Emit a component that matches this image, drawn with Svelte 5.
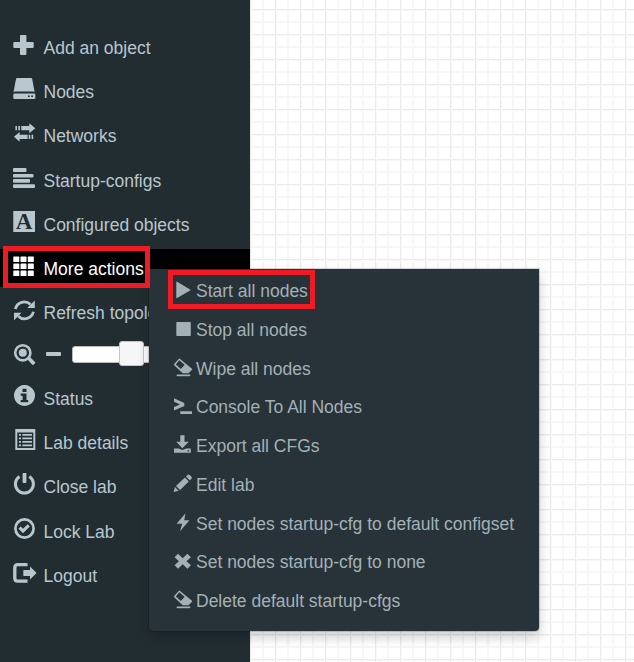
<script>
  const items = [
    { icon: 'plus', label: 'Add an object', height: 44 },
    { icon: 'disk', label: 'Nodes', height: 44 },
    { icon: 'transfer', label: 'Networks', height: 45 },
    { icon: 'align', label: 'Startup-configs', height: 44 },
    { icon: 'letter', label: 'Configured objects', height: 44 },
    { icon: 'grid', label: 'More actions', height: 44, active: true },
    { icon: 'refresh', label: 'Refresh topology', height: 45 },
    { icon: 'zoom', slider: true, height: 41 },
    { icon: 'info', label: 'Status', height: 44 },
    { icon: 'list', label: 'Lab details', height: 44 },
    { icon: 'power', label: 'Close lab', height: 45 },
    { icon: 'check', label: 'Lock Lab', height: 44 },
    { icon: 'logout', label: 'Logout', height: 44 }
  ];
  const actions = [
    { icon: 'play', label: 'Start all nodes', height: 39 },
    { icon: 'stop', label: 'Stop all nodes', height: 39 },
    { icon: 'eraser', label: 'Wipe all nodes', height: 38 },
    { icon: 'console', label: 'Console To All Nodes', height: 39 },
    { icon: 'download', label: 'Export all CFGs', height: 39 },
    { icon: 'pencil', label: 'Edit lab', height: 39 },
    { icon: 'bolt', label: 'Set nodes startup-cfg to default configset', height: 38 },
    { icon: 'cross', label: 'Set nodes startup-cfg to none', height: 39 },
    { icon: 'eraser', label: 'Delete default startup-cfgs', height: 39 }
  ];
</script>

{#snippet sideIcon(name)}
  <svg class="side-icon" width="25" height="24" viewBox="0 0 25 24" fill="currentColor">
    {#if name === 'plus'}
      <path d="M9 2h4.400q1 0 1 1v6h6.300q1 0 1 1v4q0 1-1 1h-6.300v6q0 1-1 1H9q-1 0-1-1v-6H2.300q-1 0-1-1v-4q0-1 1-1H8V3q0-1 1-1z" />
    {:else if name === 'disk'}
      <path d="M5 1h14q1 0 1.200 1l2.400 13q-.8-.4-1.600-.4H3q-.8 0-1.500.4L4 2q.2-1 1-1z" />
      <path fill-rule="evenodd" d="M2.300 16.500h20q1 0 1 1V21q0 1-1 1h-20q-1 0-1-1v-3.500q0-1 1-1zM16 18.500v1.500h1.600v-1.500zM19.300 18.500v1.500h1.700v-1.500z" />
    {:else if name === 'transfer'}
      <path d="M3.400 5h1.600v4.300H3.400zM6.300 5H8v4.300H6.300zM9.300 5h8V2.300L23.300 7.200l-6 5V9.300h-8zM2 15.700 7.600 11v2.700h8V18h-8v2.700zM16.700 13.700h1.600V18h-1.600zM19.600 13.700h1.600V18h-1.600z" />
    {:else if name === 'align'}
      <rect x="1" y="2" width="13.500" height="4" rx="1" />
      <rect x="1" y="8" width="20.500" height="3.600" rx="1" />
      <rect x="1" y="13" width="17" height="3.700" rx="1" />
      <rect x="1" y="18.300" width="22" height="3.700" rx="1" />
    {:else if name === 'letter'}
      <path d="M1.300 1H23v21H1.300z" />
      <text class="letter" x="12.100" y="18.800" text-anchor="middle">A</text>
    {:else if name === 'grid'}
      {#each [2.600, 9.500, 16.500] as y}
        {#each [1.300, 8.500, 15.800] as x}
          <rect {x} {y} width="6" height="5.500" rx=".6" />
        {/each}
      {/each}
    {:else if name === 'refresh'}
      <g fill="none" stroke="currentColor" stroke-width="2.800">
        <path d="M3.400 11A9 9 0 0 1 18.500 6.500" />
        <path d="M21.400 13.800A9 9 0 0 1 6.300 18.200" />
      </g>
      <path d="M22.800 2.500V10h-7.600zM2 22.300v-7.500h7.500z" />
    {:else if name === 'zoom'}
      <circle cx="10.800" cy="9.800" r="7.600" fill="none" stroke="currentColor" stroke-width="2.600" />
      <circle cx="10.800" cy="9.800" r="4" />
      <path d="m15.500 16.500 2.500-2.500 5 5q.6.600 0 1.200l-1.500 1.500q-.6.600-1.200 0z" />
    {:else if name === 'info'}
      <path fill-rule="evenodd" d="M12.500 1a10.500 10.500 0 1 0 .01 0zM10.500 4.700h4v3.200h-4zM8.700 9.500h5.800v6.400h1.700v2.300H8.700v-2.300h1.900v-4.100H8.700z" />
    {:else if name === 'list'}
      <path fill-rule="evenodd" d="M3.300 1h20v21h-20zM5.300 4.500v15.500h16V4.500z" />
      <path d="M7 6h2v1.800H7zM10.300 6H20v1.800h-9.700zM7 9.500h2v1.800H7zM10.300 9.500H20v1.800h-9.700zM7 13h2v1.800H7zM10.300 13H20v1.800h-9.700zM7 16.500h2v1.800H7zM10.300 16.500H20v1.800h-9.700z" />
    {:else if name === 'power'}
      <path d="M7.500 4.500a9 9 0 1 0 9.800 0" fill="none" stroke="currentColor" stroke-width="3" />
      <rect x="10.600" y="1" width="3.800" height="10" rx=".8" />
    {:else if name === 'check'}
      <circle cx="12.500" cy="11.500" r="9.100" fill="none" stroke="currentColor" stroke-width="2.700" />
      <path d="m6.500 11.700 2.200-2.200 2.300 2.200 4.700-4.500 2.100 2.200-6.800 6.800z" />
    {:else if name === 'logout'}
      <path d="M15.500 3.700H5.800q-3 0-3 3v10.500q0 3 3 3h9.700" fill="none" stroke="currentColor" stroke-width="3.300" />
      <path d="M12 9h6V5.500l6.600 6.600L18 18.500V15h-6q-.7 0-.7-.7V9.700Q11.300 9 12 9z" />
    {/if}
  </svg>
{/snippet}

{#snippet actionIcon(name)}
  <svg class="action-icon" width="20" height="20" viewBox="0 0 20 20" fill="currentColor">
    {#if name === 'play'}
      <path d="M3.300 2q0-.8.8-.3l13 7.800q.5.500 0 1l-13 7.500q-.8.400-.8-.4z" />
    {:else if name === 'stop'}
      <rect x="3.300" y="3" width="14.500" height="14" rx=".7" />
    {:else if name === 'eraser'}
      <path fill-rule="evenodd" d="M6.500.4 19 10.800q.5.500 0 1l-3.500 3.500H9.700L1.200 7.200q-.6-.6 0-1.200L5.900.7q.3-.4.600-.3zM6.300 2.300 2.800 6.400l5.100 4.500 3.800-4.200z" />
      <path d="M3.700 16.500h13.500v1.700H3.700z" />
    {:else if name === 'console'}
      <path d="M1 2.200 11.300 7v3L1 14.500v-3.400L7.100 8.600 1 5.800zM7.300 15.200H19V18H7.300z" />
    {:else if name === 'download'}
      <path d="M7.300.3h4.200v6.500h4.300L9.400 13.200 3.200 6.800h4.100z" />
      <path fill-rule="evenodd" d="M1 13.500h4.600l3.800 1.500 3.900-1.500h4.500v4.300H1zM14.600 15.200v1.200h1.500v-1.200z" />
    {:else if name === 'pencil'}
      <path d="m.6 18 1.300-5 3.800 3.700zM3 12l8.900-8.400 3.900 3.900L7 16zM13 2.500 14.800.8q.8-.7 1.600 0l2.200 2.300q.7.7 0 1.500L16.900 6.400z" />
    {:else if name === 'bolt'}
      <path d="m12.500.3-1.300 7h5.300L7 18.300l2.200-7.500H3.600z" />
    {:else if name === 'cross'}
      <path d="m5 2.800 4.700 4.500 4.700-4.500 3.500 3.400-4.400 4 4.400 4-3.500 3.500-4.700-4.400L5 17.700l-3.400-3.500 4.300-4-4.300-4z" />
    {/if}
  </svg>
{/snippet}

<div class="page">
  <aside class="sidebar">
    {#each items as item}
      <div class="item" class:active={item.active} style:height="{item.height}px">
        {@render sideIcon(item.icon)}
        {#if item.slider}
          <span class="minus"></span>
          <span class="track"><span class="handle"></span></span>
        {:else}
          <span class="label">{item.label}</span>
        {/if}
      </div>
    {/each}
  </aside>
  <main class="canvas"></main>

  <div class="menu">
    {#each actions as action}
      <div class="action" style:height="{action.height}px">
        {@render actionIcon(action.icon)}
        <span class="action-label">{action.label}</span>
      </div>
    {/each}
  </div>
  <div class="mark mark-more"></div>
  <div class="mark mark-start"></div>
</div>

<style>
  .page {
    position: relative;
    display: flex;
    width: 634px;
    height: 662px;
    overflow: hidden;
    font-family: 'Liberation Sans', Arial, sans-serif;
    font-size: 17.5px;
    background: #fff;
  }
  .sidebar {
    box-sizing: border-box;
    flex: 0 0 250px;
    padding-top: 25px;
    background: #222d32;
    color: #b8c7ce;
  }
  .canvas {
    flex: 1;
    background-image:
      linear-gradient(90deg, #ebebeb 1px, #f8f8f8 1px 2px, transparent 2px),
      linear-gradient(#ebebeb 1px, #f8f8f8 1px 2px, transparent 2px),
      linear-gradient(90deg, #f7f7f8 2px, transparent 2px),
      linear-gradient(#f7f7f8 2px, transparent 2px);
    background-size: 25px 25px;
    background-position: 0 0, 0 9px, 12px 0, 0 21px;
  }
  .item {
    box-sizing: border-box;
    display: flex;
    align-items: flex-start;
    padding: 8px 0 0 12px;
    white-space: nowrap;
  }
  .item.active {
    background: linear-gradient(transparent 3px, #000 3px 41px, transparent 41px);
    color: #fff;
  }
  .side-icon {
    flex: none;
  }
  .label {
    margin: 4px 0 0 6.5px;
    line-height: 22px;
  }
  .letter {
    font: bold 23px 'Liberation Serif', serif;
    fill: #222d32;
  }
  .minus {
    width: 15px;
    height: 4px;
    margin: 9px 11px 0 9px;
    border-radius: 1px;
    background: #b8c7ce;
  }
  .track {
    box-sizing: border-box;
    display: flex;
    width: 100px;
    height: 17px;
    margin-top: 3px;
    padding-left: 46px;
    border: 1px solid #bbb;
    border-radius: 3px;
    background: #fff;
  }
  .handle {
    box-sizing: border-box;
    width: 25px;
    height: 25px;
    margin-top: -6px;
    border: 1px solid #c5c5c5;
    border-radius: 3px;
    background: #f6f6f6;
  }
  .menu {
    position: absolute;
    left: 148px;
    top: 268px;
    box-sizing: border-box;
    width: 392px;
    height: 364px;
    padding-top: 2px;
    border: 1px solid rgba(0, 0, 0, 0.15);
    border-radius: 0 0 5px 5px;
    background: #273338;
    background-clip: padding-box;
    box-shadow: 0 6px 12px rgba(0, 0, 0, 0.18);
    color: #a3b1b7;
  }
  .action {
    box-sizing: border-box;
    display: flex;
    align-items: flex-start;
    padding: 9px 0 0 24px;
    white-space: nowrap;
  }
  .action-icon {
    flex: none;
  }
  .action-label {
    margin-left: 3px;
    line-height: 22px;
  }
  .mark {
    position: absolute;
    box-sizing: border-box;
    border: 5px solid #ed1c24;
  }
  .mark-more {
    left: 3px;
    top: 246px;
    width: 147px;
    height: 42px;
  }
  .mark-start {
    left: 168px;
    top: 270px;
    width: 147px;
    height: 39px;
  }
</style>
